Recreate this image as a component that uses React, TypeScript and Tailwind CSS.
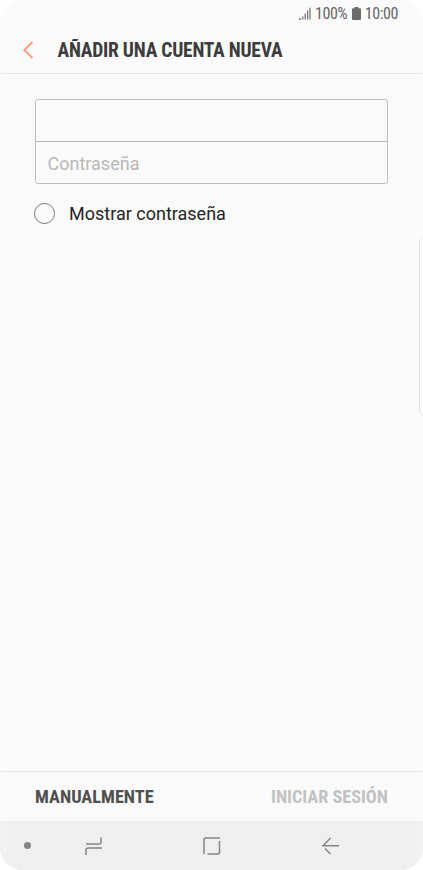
function StatusBar() {
    return (
        <div className="flex h-[27px] items-center justify-end pr-[25px] text-base leading-none tracking-[-0.4px] text-[#666] [font-stretch:75%]">
            <svg width="13" height="13" viewBox="0 0 13 13" fill="none" stroke="#777" strokeWidth="1.3" className="mr-1">
                <path d="M1 12h2.200M4.800 12.500V9.500M7.200 12.500V6.500M9.600 12.500V3.500M12 12.500V.8" />
            </svg>
            <span>100%</span>
            <svg width="9" height="13" viewBox="0 0 9 13" fill="#6b6b6b" className="mr-1 ml-[4.5px]">
                <path d="M2.500 0h4v1.300H8q1 0 1 1v9.700q0 1-1 1H1q-1 0-1-1V2.300q0-1 1-1h1.500z" />
            </svg>
            <span>10:00</span>
        </div>
    );
}

function Header() {
    return (
        <header className="flex h-[47px] items-center border-b border-[#e6e6e6] pl-[23px]">
            <svg width="11" height="18" viewBox="0 0 11 18" fill="none" stroke="#ff9a73" strokeWidth="1.8" className="mr-[23.5px]">
                <path d="M9.500 1 1.300 9l8.200 8" />
            </svg>
            <h1 className="pt-0.5 text-[19.5px] leading-none font-bold tracking-[-0.23px] text-[#3c3c3c] [font-stretch:75%]">
                AÑADIR UNA CUENTA NUEVA
            </h1>
        </header>
    );
}

function NavBar() {
    return (
        <nav className="flex h-[49px] items-center bg-[#efefef] pl-6">
            <span className="size-[7px] rounded-full bg-[#858585]" />
            <svg width="18" height="20" viewBox="0 0 18 20" fill="none" stroke="#858585" strokeWidth="1.5" className="mt-px ml-[54px]">
                <path d="M1 8h13q2 0 2-2V1.500M17 12H3q-2 0-2 2v5" />
            </svg>
            <svg width="18" height="18" viewBox="0 0 18 18" fill="none" stroke="#858585" strokeWidth="1.5" className="mt-px ml-[100px]">
                <path d="M1 17V3q0-2 2-2h14M16.500 4v11q0 2-2 2H4.500" />
            </svg>
            <svg width="17" height="18" viewBox="0 0 17 18" fill="none" stroke="#858585" strokeWidth="1.5" className="mt-px ml-[101px]">
                <path d="M8.500 1 1 8.800H17M3 11.500l5.500 5.500" />
            </svg>
        </nav>
    );
}

export default function App() {
    return (
        <div className="h-[870px] w-[423px] bg-white font-[Roboto,sans-serif]">
            <div className="relative flex h-full flex-col overflow-hidden rounded-[22px] bg-[#fafafa]">
                <StatusBar />
                <Header />
                <main className="flex-1 px-[35px] pt-[25px]">
                    <div className="h-[85px] overflow-hidden rounded-[3px] border border-[#bdbdbd]">
                        <input type="text" className="block h-[42px] w-full border-b border-[#b5b5b5] px-3 text-lg outline-none" />
                        <input
                            type="password"
                            placeholder="Contraseña"
                            className="block h-[42px] w-full px-[11.5px] pt-px text-lg outline-none placeholder:text-[#b8b8b8]"
                        />
                    </div>
                    <label className="mt-[18px] -ml-px flex h-[22px] items-center text-lg leading-[22px] text-[#252525]">
                        <span className="mr-3.5 size-[21px] rounded-full border border-[#757575]" />
                        <span className="pt-0.5">Mostrar contraseña</span>
                    </label>
                </main>
                <footer className="flex h-[50px] items-center justify-between border-t border-[#e6e6e6] px-[35px] text-[18.3px] font-bold [font-stretch:75%]">
                    <button className="text-[#505050]">MANUALMENTE</button>
                    <button className="tracking-[-0.05px] text-[#c2c2c2]">INICIAR SESIÓN</button>
                </footer>
                <NavBar />
                <div className="absolute top-[237px] -right-2 h-[179px] w-3 rounded-md border border-[#d8d8d8] bg-[#fdfdfd]" />
                <div className="pointer-events-none absolute inset-0 border-x-[7px] border-white/20" />
            </div>
        </div>
    );
}
